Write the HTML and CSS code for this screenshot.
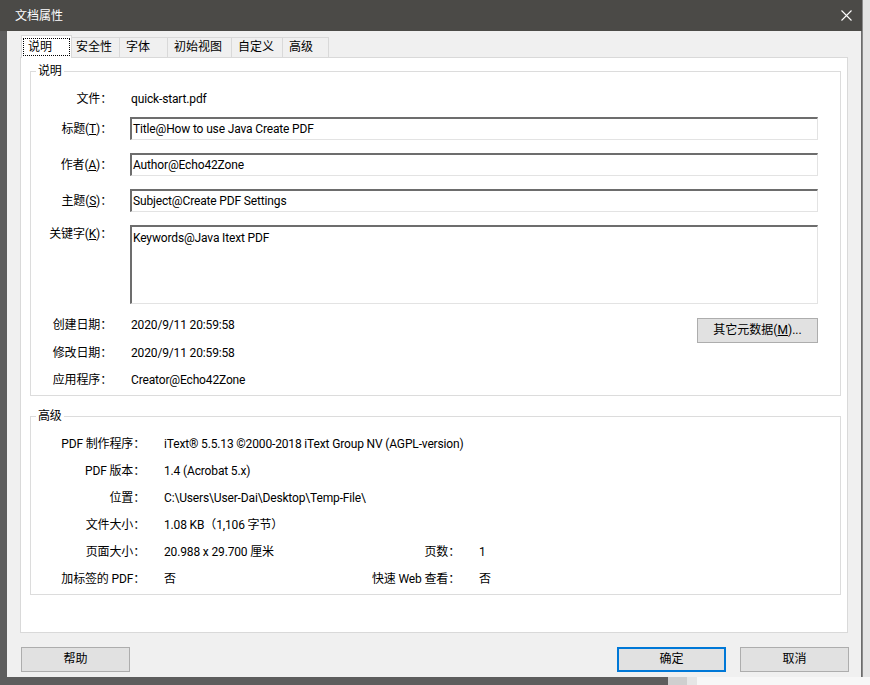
FILE: index.html
```html
<!DOCTYPE html>
<html lang="zh-CN">
<head>
<meta charset="utf-8">
<title>文档属性</title>
<link rel="stylesheet" href="styles.css">
</head>
<body>
<div class="screen">
  <div class="top">
    <div class="window">
      <div class="titlebar">
        <span class="title">文档属性</span>
        <svg class="close" width="11" height="11" viewBox="0 0 11 11"><path d="M0.5 0.5 L10.5 10.5 M10.5 0.5 L0.5 10.5" stroke="#fff" stroke-width="1.1" fill="none"/></svg>
      </div>
      <div class="client">
        <div class="tabs">
          <div class="tab active"><span class="focus">说明</span></div>
          <div class="tab t-sec">安全性</div>
          <div class="tab t-font">字体</div>
          <div class="tab t-view">初始视图</div>
          <div class="tab t-custom">自定义</div>
          <div class="tab t-adv">高级</div>
        </div>
        <div class="panel">
          <fieldset class="group g1">
            <legend>说明</legend>
            <div class="desc-grid">
              <div class="lbl l-text">文件：</div>
              <div class="val wide">quick-start.pdf</div>

              <div class="lbl l-input">标题(<u>T</u>)：</div>
              <div class="field wide">Title@How to use Java Create PDF</div>

              <div class="lbl l-input">作者(<u>A</u>)：</div>
              <div class="field wide">Author@Echo42Zone</div>

              <div class="lbl l-input">主题(<u>S</u>)：</div>
              <div class="field wide">Subject@Create PDF Settings</div>

              <div class="lbl l-area">关键字(<u>K</u>)：</div>
              <div class="field area wide">Keywords@Java Itext PDF</div>

              <div class="lbl l-date">创建日期：</div>
              <div class="val date">2020/9/11 20:59:58</div>
              <button class="btn meta">其它元数据(<u>M</u>)...</button>

              <div class="lbl l-date">修改日期：</div>
              <div class="val date">2020/9/11 20:59:58</div>

              <div class="lbl l-date">应用程序：</div>
              <div class="val date">Creator@Echo42Zone</div>
            </div>
          </fieldset>
          <fieldset class="group g2">
            <legend>高级</legend>
            <div class="adv-grid">
              <div class="lbl">PDF 制作程序：</div>
              <div class="val wide">iText® 5.5.13 ©2000-2018 iText Group NV (AGPL-version)</div>

              <div class="lbl">PDF 版本：</div>
              <div class="val wide">1.4 (Acrobat 5.x)</div>

              <div class="lbl">位置：</div>
              <div class="val wide">C:\Users\User-Dai\Desktop\Temp-File\</div>

              <div class="lbl">文件大小：</div>
              <div class="val wide">1.08 KB（1,106 字节）</div>

              <div class="lbl">页面大小：</div>
              <div class="val">20.988 x 29.700 厘米</div>
              <div class="lbl">页数：</div>
              <div class="val">1</div>

              <div class="lbl">加标签的 PDF：</div>
              <div class="val">否</div>
              <div class="lbl">快速 Web 查看：</div>
              <div class="val">否</div>
            </div>
          </fieldset>
        </div>
        <div class="buttons">
          <button class="btn dlg">帮助</button>
          <div class="spacer"></div>
          <button class="btn dlg default">确定</button>
          <button class="btn dlg cancel">取消</button>
        </div>
      </div>
    </div>
    <div class="rstrip"></div>
  </div>
  <div class="bstrip">
    <div class="b-dark"></div>
    <div class="b-box"></div>
    <div class="b-mid"></div>
    <div class="b-light"></div>
  </div>
</div>
</body>
</html>
```
FILE: styles.css
```css
* { box-sizing: border-box; }
html, body { margin: 0; padding: 0; }
body {
  background: #5d5d5d;
  font-family: Roboto, "Noto Sans CJK SC", sans-serif;
  font-size: 12px;
  letter-spacing: -0.15px;
  color: #000;
}
u { text-decoration: underline; text-underline-offset: 1px; }

.screen { width: 870px; height: 685px; overflow: hidden; display: flex; flex-direction: column; }
.top { display: flex; height: 677px; }
.window { width: 862px; display: flex; flex-direction: column; }
.rstrip { flex: 1; background: #e4e4e4; border-left: 1px solid #8a8a8a; }

.titlebar {
  height: 31px;
  background: #4b4a47;
  display: flex;
  align-items: center;
  justify-content: space-between;
  padding: 0 10px 0 15px;
}
.title { color: #fff; font-size: 12px; line-height: 16px; letter-spacing: 0; }
.close { display: block; }

.client {
  margin-left: 7px;
  height: 646px;
  background: #f0f0f0;
  border-right: 1px solid #6b6b6b;
  display: flex;
  flex-direction: column;
}

/* Tabs */
.tabs {
  display: flex;
  align-items: flex-end;
  padding: 4px 0 0 14px;
  height: 26px;
}
.tab {
  height: 20px;
  border: 1px solid #d9d9d9;
  border-bottom: none;
  background: #f0f0f0;
  line-height: 19px;
  padding-left: 6px;
  white-space: nowrap;
  letter-spacing: 0;
}
.tab + .tab { margin-left: -1px; }
.tab.active {
  width: 51px;
  height: 23px;
  margin-bottom: -1px;
  background: #fff;
  padding: 2px 0 0 1px;
  position: relative;
  z-index: 1;
}
.focus {
  display: block;
  width: 47px;
  height: 18px;
  outline: 1px dotted #000;
  outline-offset: -1px;
  line-height: 18px;
  padding-left: 5px;
}
.t-sec { width: 49px; padding-left: 4px; }
.t-font { width: 49px; }
.t-view { width: 65px; }
.t-custom { width: 52px; }
.t-adv { width: 47px; }

/* Panel */
.panel {
  margin-left: 13px;
  width: 828px;
  height: 576px;
  background: #fff;
  border: 1px solid #d9d9d9;
}

.group {
  margin: 0 6px 0 9px;
  border: 1px solid #dcdcdc;
  min-width: 0;
}
.group legend {
  margin-left: 5px;
  padding: 0 2px;
  line-height: 16px;
  font-size: 12px;
}
.g1 { margin-top: 5px; padding: 10px 22px 8px 0; }
.g2 { margin-top: 12px; padding: 7px 0 1px 0; }

.lbl { text-align: right; white-space: nowrap; }
.val { white-space: nowrap; }

.desc-grid {
  display: grid;
  grid-template-columns: 81px 1fr auto;
  grid-template-rows: 28px 36px 36px 36px 91px 28px 27px 16px;
  column-gap: 18px;
}
.desc-grid > * { align-self: start; }
.desc-grid .wide { grid-column: 2 / 4; }
.l-text, .desc-grid .val { line-height: 20px; }
.desc-grid .val { padding-left: 1px; }
.l-input { line-height: 24px; }
.l-area { line-height: 16px; margin-top: 1px; }
.l-date, .desc-grid .date { line-height: 18px; }

.field {
  height: 23px;
  background: #fff;
  border-top: 2px solid #6d6d6d;
  border-left: 2px solid #6d6d6d;
  border-right: 1px solid #e3e3e3;
  border-bottom: 1px solid #e3e3e3;
  padding-left: 1px;
  line-height: 20px;
  white-space: nowrap;
}
.field.area { height: 79px; line-height: 16px; padding-top: 3px; }

.btn {
  font: inherit;
  color: #000;
  background: #e1e1e1;
  border: 1px solid #adadad;
  padding: 0;
  height: 25px;
  line-height: 23px;
  text-align: center;
}
.meta {
  grid-column: 3;
  grid-row: 6 / 8;
  width: 121px;
  margin-top: 2px;
}

.adv-grid {
  display: grid;
  grid-template-columns: 114px 1fr auto 361px;
  grid-auto-rows: 27px;
  column-gap: 19px;
  line-height: 27px;
}
.adv-grid .wide { grid-column: 2 / 5; }

/* Buttons */
.buttons {
  display: flex;
  margin-top: 14px;
  padding: 0 12px 0 14px;
}
.spacer { flex: 1; }
.dlg { width: 109px; }
.default { border: 2px solid #0078d7; line-height: 21px; }
.cancel { margin-left: 14px; }

/* bottom background strip */
.bstrip { display: flex; height: 8px; }
.b-dark { width: 668px; background: #5d5d5d; }
.b-box { width: 19px; background: #cfcfcf; }
.b-mid { width: 10px; background: #e6e6e6; }
.b-light { flex: 1; background: #f7f7f7; }
```
